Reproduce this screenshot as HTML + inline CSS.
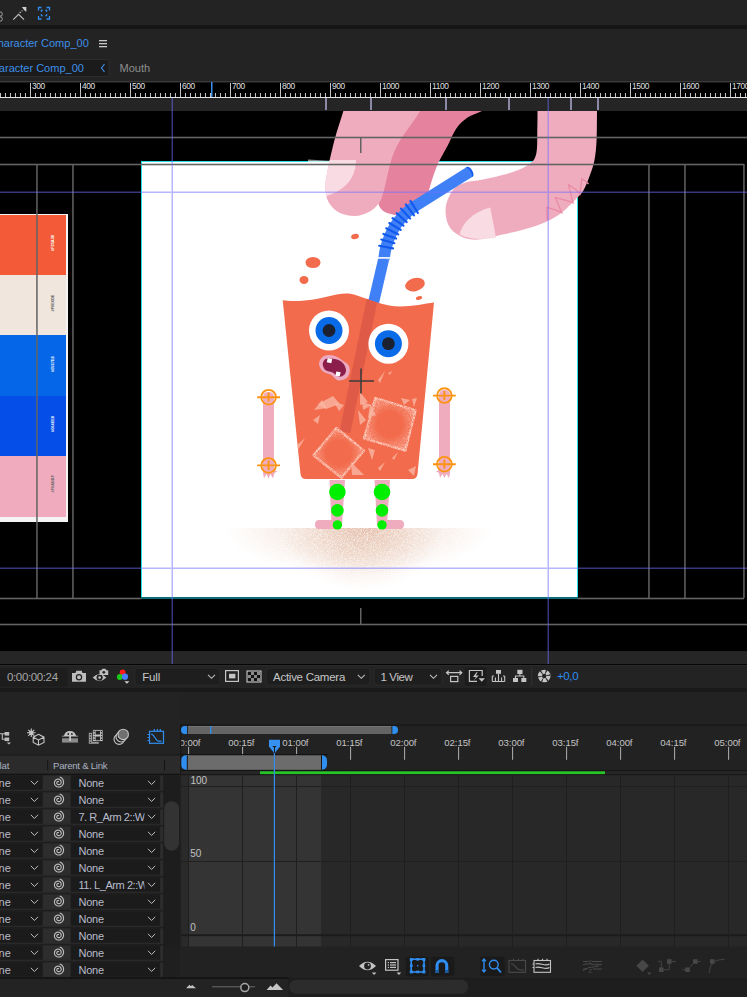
<!DOCTYPE html>
<html><head><meta charset="utf-8">
<style>
html,body{margin:0;padding:0;width:747px;height:997px;overflow:hidden;background:#232323;}
body{position:relative;font-family:"Liberation Sans",sans-serif;color:#b0b0b0;}
.a{position:absolute;}
svg{position:absolute;left:0;top:0;overflow:visible;}
</style></head><body>
<!-- top toolbar -->
<div class="a" style="left:0;top:0;width:747px;height:25px;background:#232323"></div>
<div class="a" style="left:0;top:25px;width:747px;height:4px;background:#161616"></div>
<div class="a" style="left:0;top:29px;width:747px;height:53px;background:#232323"></div>
<!-- ruler -->
<div class="a" style="left:0;top:81px;width:747px;height:1px;background:#3a3a3a"></div>
<div class="a" style="left:0;top:82px;width:747px;height:16px;background:#000"></div>
<div class="a" style="left:0;top:98px;width:747px;height:13px;background:#252525"></div>
<!-- viewer -->
<div class="a" style="left:0;top:111px;width:747px;height:540px;background:#000"></div>
<div class="a" style="left:0;top:651px;width:747px;height:13px;background:#262626"></div>
<div class="a" style="left:0;top:663.5px;width:747px;height:1.5px;background:#050505"></div><div class="a" style="left:0;top:665px;width:747px;height:1px;background:#2b2b2b"></div>
<div class="a" style="left:0;top:666px;width:747px;height:22px;background:#232323"></div>
<div class="a" style="left:0;top:688px;width:747px;height:4px;background:#1a1a1a"></div>
<div class="a" style="left:0;top:692px;width:747px;height:286px;background:#232323"></div>
<div class="a" style="left:0;top:978px;width:747px;height:19px;background:#1b1b1b"></div>
<!-- canvas -->
<div class="a" style="left:141px;top:161px;width:437px;height:437px;background:#fff"></div>

<svg width="747" height="997" style="left:0;top:0"><!-- canvas border -->
<rect x="141" y="161" width="1" height="437" fill="#22e0e8"/>
<rect x="577" y="161" width="1" height="437" fill="#22e0e8"/>
<rect x="141" y="161" width="437" height="1" fill="#22e0e8"/>
<rect x="141" y="597" width="437" height="2" fill="#0c6e74"/>
</svg>

<svg width="747" height="120" style="left:0;top:0">
<rect x="0" y="82" width="747" height="1" fill="#1a1a1a"/>
<path d="M30.5 83V97M80.5 83V97M130.5 83V97M180.5 83V97M230.5 83V97M280.5 83V97M330.5 83V97M380.5 83V97M430.5 83V97M480.5 83V97M530.5 83V97M580.5 83V97M630.5 83V97M680.5 83V97M730.5 83V97M0.5 93V97M5.5 93V97M10.5 93V97M15.5 93V97M20.5 93V97M25.5 93V97M35.5 93V97M40.5 93V97M45.5 93V97M50.5 93V97M55.5 93V97M60.5 93V97M65.5 93V97M70.5 93V97M75.5 93V97M85.5 93V97M90.5 93V97M95.5 93V97M100.5 93V97M105.5 93V97M110.5 93V97M115.5 93V97M120.5 93V97M125.5 93V97M135.5 93V97M140.5 93V97M145.5 93V97M150.5 93V97M155.5 93V97M160.5 93V97M165.5 93V97M170.5 93V97M175.5 93V97M185.5 93V97M190.5 93V97M195.5 93V97M200.5 93V97M205.5 93V97M210.5 93V97M215.5 93V97M220.5 93V97M225.5 93V97M235.5 93V97M240.5 93V97M245.5 93V97M250.5 93V97M255.5 93V97M260.5 93V97M265.5 93V97M270.5 93V97M275.5 93V97M285.5 93V97M290.5 93V97M295.5 93V97M300.5 93V97M305.5 93V97M310.5 93V97M315.5 93V97M320.5 93V97M325.5 93V97M335.5 93V97M340.5 93V97M345.5 93V97M350.5 93V97M355.5 93V97M360.5 93V97M365.5 93V97M370.5 93V97M375.5 93V97M385.5 93V97M390.5 93V97M395.5 93V97M400.5 93V97M405.5 93V97M410.5 93V97M415.5 93V97M420.5 93V97M425.5 93V97M435.5 93V97M440.5 93V97M445.5 93V97M450.5 93V97M455.5 93V97M460.5 93V97M465.5 93V97M470.5 93V97M475.5 93V97M485.5 93V97M490.5 93V97M495.5 93V97M500.5 93V97M505.5 93V97M510.5 93V97M515.5 93V97M520.5 93V97M525.5 93V97M535.5 93V97M540.5 93V97M545.5 93V97M550.5 93V97M555.5 93V97M560.5 93V97M565.5 93V97M570.5 93V97M575.5 93V97M585.5 93V97M590.5 93V97M595.5 93V97M600.5 93V97M605.5 93V97M610.5 93V97M615.5 93V97M620.5 93V97M625.5 93V97M635.5 93V97M640.5 93V97M645.5 93V97M650.5 93V97M655.5 93V97M660.5 93V97M665.5 93V97M670.5 93V97M675.5 93V97M685.5 93V97M690.5 93V97M695.5 93V97M700.5 93V97M705.5 93V97M710.5 93V97M715.5 93V97M720.5 93V97M725.5 93V97M735.5 93V97M740.5 93V97M745.5 93V97" stroke="#c4c4c4" stroke-width="1"/>
<rect x="0" y="97" width="747" height="1" fill="#e8e8e8"/>
<g font-family="Liberation Sans" font-size="8.4" fill="#e0e0e0" letter-spacing="-0.4">
<text x="32" y="89">300</text><text x="82" y="89">400</text><text x="132" y="89">500</text><text x="182" y="89">600</text><text x="232" y="89">700</text><text x="282" y="89">800</text><text x="332" y="89">900</text><text x="382" y="89">1000</text><text x="432" y="89">1100</text><text x="482" y="89">1200</text><text x="532" y="89">1300</text><text x="582" y="89">1400</text><text x="632" y="89">1500</text><text x="682" y="89">1600</text><text x="732" y="89">1700</text></g>
<rect x="211" y="82" width="1.5" height="15" fill="#3d8ff0"/>
<rect x="325" y="98" width="2" height="12" fill="#8a8aa8"/><rect x="370" y="98" width="2" height="12" fill="#8a8aa8"/><rect x="445" y="98" width="2" height="12" fill="#8a8aa8"/><rect x="508" y="98" width="2" height="12" fill="#8a8aa8"/><rect x="570" y="98" width="2" height="12" fill="#8a8aa8"/><rect x="597" y="98" width="2" height="12" fill="#8a8aa8"/>
</svg>

<div class="a" style="left:0;top:214px;width:68px;height:308px;background:#f4f4f4"></div>
<div class="a" style="left:0;top:215px;width:66px;height:60px;background:#f25a38"></div>
<div class="a" style="left:0;top:275px;width:66px;height:60px;background:#f0e6de"></div>
<div class="a" style="left:0;top:335px;width:66px;height:61px;background:#0567e8"></div>
<div class="a" style="left:0;top:396px;width:66px;height:60px;background:#064ee8"></div>
<div class="a" style="left:0;top:456px;width:66px;height:61px;background:#f0abbf"></div>
<svg width="747" height="997">
<g font-family="Liberation Sans" font-size="3.9" font-weight="bold">
<text transform="translate(53.6 251) rotate(-90)" fill="#ffffff">#F25A38</text>
<text transform="translate(53.6 311.5) rotate(-90)" fill="#555">#F0E6DE</text>
<text transform="translate(53.6 372) rotate(-90)" fill="#ffffff">#0567E8</text>
<text transform="translate(53.6 432) rotate(-90)" fill="#ffffff">#064EE8</text>
<text transform="translate(53.6 492.5) rotate(-90)" fill="#666">#F0ABBF</text>
</g>
</svg>

<svg width="747" height="997" style="left:0;top:0">
<defs>
<clipPath id="vclip"><rect x="0" y="111" width="747" height="540"/></clipPath>
<clipPath id="canvclip"><rect x="141" y="161" width="437" height="437"/></clipPath>
<radialGradient id="shg" cx="358" cy="527" r="135" gradientUnits="userSpaceOnUse" gradientTransform="translate(358 527) scale(1 0.36) translate(-358 -527)">
<stop offset="0" stop-color="#d8a080" stop-opacity="0.32"/>
<stop offset="0.6" stop-color="#dcaa8c" stop-opacity="0.22"/>
<stop offset="0.85" stop-color="#dcae92" stop-opacity="0.08"/>
<stop offset="1" stop-color="#e0b89c" stop-opacity="0"/>
</radialGradient>
<radialGradient id="shg2" cx="362" cy="527" r="80" gradientUnits="userSpaceOnUse" gradientTransform="translate(362 527) scale(1 0.8) translate(-362 -527)">
<stop offset="0" stop-color="#d09070" stop-opacity="0.45"/>
<stop offset="0.5" stop-color="#d49a7a" stop-opacity="0.25"/>
<stop offset="1" stop-color="#dcae92" stop-opacity="0"/>
</radialGradient>
<filter id="grain" x="0" y="0" width="100%" height="100%">
<feTurbulence type="fractalNoise" baseFrequency="1.3" numOctaves="1" seed="5" result="nz"/>
<feColorMatrix in="nz" type="matrix" values="0 0 0 0 0  0 0 0 0 0  0 0 0 0 0  0 0 0 1.8 -0.1" result="na"/>
<feComposite in="SourceGraphic" in2="na" operator="in"/>
</filter>
</defs>
<defs><clipPath id="glassclip"><path d="M282.7 300.3 C295 302.5 315 300 330 296 C340 293.5 348 292.3 357 295.5 C370 300 386 306.5 400 306.5 C413 306.5 425 303.5 434 302.5 L417.5 474 Q417 479 412 479 L306 479 Q301 479 300.5 474 Z"/></clipPath></defs>
<g clip-path="url(#vclip)">
<g clip-path="url(#canvclip)"><g filter="url(#grain)"><rect x="215" y="528" width="300" height="68" fill="url(#shg)"/><rect x="270" y="528" width="190" height="68" fill="url(#shg2)"/></g></g>
<path d="M415.0 90.0 C399.8 93.5 412.1 102.7 409.0 111.0 C405.9 119.3 400.0 129.8 396.4 140.0 C392.8 150.2 390.1 163.3 387.5 172.0 C384.9 180.7 382.5 186.7 381.0 192.0 C379.5 197.3 377.8 200.7 378.5 204.0 C379.2 207.3 381.5 210.1 385.0 212.0 C388.5 213.9 394.8 215.2 399.6 215.2 C404.4 215.2 409.8 214.4 414.0 212.0 C418.2 209.6 422.0 206.3 425.0 201.0 C428.0 195.7 429.8 186.4 432.0 180.0 C434.2 173.6 435.8 168.4 438.5 162.6 C441.2 156.8 445.1 150.6 448.0 145.0 C450.9 139.4 452.8 133.6 456.0 129.0 C459.2 124.4 463.2 120.6 467.5 117.6 C471.8 114.6 476.6 113.9 482.0 111.0 C487.4 108.1 497.0 103.5 500.0 100.0 C503.0 96.5 514.2 91.7 500.0 90.0 C485.8 88.3 430.2 86.5 415.0 90.0Z" fill="#e5839f"/>
<defs><clipPath id="lfclip"><path d="M349.0 90.0 C334.9 93.5 345.8 102.7 343.4 111.0 C341.0 119.3 337.2 129.8 334.5 140.0 C331.8 150.2 328.8 164.0 327.3 172.0 C325.8 180.0 325.2 183.0 325.4 188.0 C325.6 193.0 326.2 197.9 328.5 202.0 C330.8 206.1 334.6 210.2 339.0 212.5 C343.4 214.8 349.6 216.1 354.6 216.0 C359.6 215.9 364.9 214.2 369.0 212.0 C373.1 209.8 376.6 206.3 379.0 203.0 C381.4 199.7 380.8 200.8 383.5 192.0 C386.2 183.2 388.9 163.5 395.0 150.0 C401.1 136.5 414.5 121.0 420.0 111.0 C425.5 101.0 439.8 93.5 428.0 90.0 C416.2 86.5 363.1 86.5 349.0 90.0Z"/></clipPath></defs>
<path d="M349.0 90.0 C334.9 93.5 345.8 102.7 343.4 111.0 C341.0 119.3 337.2 129.8 334.5 140.0 C331.8 150.2 328.8 164.0 327.3 172.0 C325.8 180.0 325.2 183.0 325.4 188.0 C325.6 193.0 326.2 197.9 328.5 202.0 C330.8 206.1 334.6 210.2 339.0 212.5 C343.4 214.8 349.6 216.1 354.6 216.0 C359.6 215.9 364.9 214.2 369.0 212.0 C373.1 209.8 376.6 206.3 379.0 203.0 C381.4 199.7 380.8 200.8 383.5 192.0 C386.2 183.2 388.9 163.5 395.0 150.0 C401.1 136.5 414.5 121.0 420.0 111.0 C425.5 101.0 439.8 93.5 428.0 90.0 C416.2 86.5 363.1 86.5 349.0 90.0Z" fill="#f0acbf"/>
<path d="M308 159.4 L330 160.8 L330 161 L308 161 Z" fill="#8a8a8a"/><rect x="308" y="161" width="22" height="1" fill="#b0f4f6"/>
<path clip-path="url(#lfclip)" d="M300 160 L356 160 C356 178 345 192 320 198 L300 200 Z" fill="#f9dbe4"/>
<path d="M537.5 90.0 C547.4 86.5 587.1 86.5 597.0 90.0 C606.9 93.5 597.1 102.7 597.0 111.0 C596.9 119.3 597.0 131.8 596.6 140.0 C596.2 148.2 595.6 154.2 594.5 160.0 C593.4 165.8 591.9 169.9 590.0 175.0 C588.1 180.1 585.9 186.4 583.4 190.5 C580.9 194.6 579.4 195.6 575.3 199.7 C571.1 203.8 565.0 210.7 558.5 215.0 C552.0 219.3 545.5 222.5 536.4 225.7 C527.3 228.9 514.7 231.9 504.0 234.2 C493.3 236.5 480.8 240.5 472.0 239.6 C463.2 238.7 455.4 234.1 451.0 229.0 C446.6 223.9 445.3 215.5 445.6 209.0 C445.9 202.5 449.5 194.4 452.9 190.0 C456.2 185.6 460.7 184.3 465.7 182.6 C470.7 180.9 475.0 181.4 482.8 179.6 C490.6 177.8 504.9 174.7 512.8 172.0 C520.7 169.3 526.1 166.8 530.0 163.6 C533.9 160.4 535.2 158.5 536.4 152.9 C537.6 147.3 537.1 137.0 537.3 130.0 C537.5 123.0 537.5 117.7 537.5 111.0 C537.5 104.3 527.6 93.5 537.5 90.0Z" fill="#f0acbf"/>
<path d="M459.5 234.5 C462 224 472 212 490.3 207.5 L496 237.8 C484 239.5 470 240 459.5 234.5 Z" fill="#f9dbe4"/>
<path d="M547.2 220 L546.8 207.3 Q555 209 561.7 212.6 L555.3 197.7 Q566 200 573 203 L568.5 184.9 Q576 189 580 194 L581.8 178.8 Q586 181 588.5 184" fill="none" stroke="#e98aa6" stroke-width="1.3" stroke-linejoin="miter"/>
<g fill="#f26b4c">
<ellipse cx="313" cy="262.5" rx="7.5" ry="5.5"/>
<ellipse cx="304" cy="280" rx="4.5" ry="4"/>
<ellipse cx="355" cy="236.5" rx="4" ry="2.6" transform="rotate(-15 355 236.5)"/>
<ellipse cx="415" cy="284.6" rx="10" ry="6.5" transform="rotate(-15 415 284.6)"/>
<ellipse cx="419" cy="298" rx="3.2" ry="1.8" transform="rotate(-15 419 298)"/>
</g>
<path d="M469.8 171.7 L413 207.5" stroke="#3f80f7" stroke-width="11.2"/>
<path d="M414.0 207.0 L414.1 206.9 L409.9 209.9 L405.6 213.6 L401.7 217.6 L398.0 221.9 L395.0 226.4 L392.2 231.3 L389.8 236.2 L387.9 241.4 L386.1 247.1 L385.0 252.0 L384.0 259.0" stroke="#3f80f7" stroke-width="11.5" fill="none" stroke-linejoin="round"/>
<path d="M410.4 200.9 L417.9 213.0" stroke="#1158ef" stroke-width="2.1" stroke-linecap="round"/>
<path d="M405.8 204.4 L414.0 215.4" stroke="#1158ef" stroke-width="2.1" stroke-linecap="round"/>
<path d="M401.0 208.6 L410.2 218.6" stroke="#1158ef" stroke-width="2.1" stroke-linecap="round"/>
<path d="M396.7 213.2 L406.7 222.1" stroke="#1158ef" stroke-width="2.1" stroke-linecap="round"/>
<path d="M392.5 218.1 L403.5 225.7" stroke="#1158ef" stroke-width="2.1" stroke-linecap="round"/>
<path d="M389.3 223.0 L400.7 229.9" stroke="#1158ef" stroke-width="2.1" stroke-linecap="round"/>
<path d="M386.2 228.3 L398.2 234.4" stroke="#1158ef" stroke-width="2.1" stroke-linecap="round"/>
<path d="M383.4 233.9 L396.1 238.6" stroke="#1158ef" stroke-width="2.1" stroke-linecap="round"/>
<path d="M381.3 239.5 L394.4 243.2" stroke="#1158ef" stroke-width="2.1" stroke-linecap="round"/>
<path d="M379.2 245.8 L393.0 248.4" stroke="#1158ef" stroke-width="2.1" stroke-linecap="round"/>
<path d="M383.8 258.5 L373.2 304" stroke="#3f80f7" stroke-width="11"/>
<path d="M377 257.9 L391 257.9" stroke="#fff" stroke-width="1.6"/>
<ellipse cx="469.8" cy="171.7" rx="2.6" ry="5.6" transform="rotate(-32.3 469.8 171.7)" fill="#1158ef"/><ellipse cx="468.6" cy="172.45" rx="2.2" ry="5.6" transform="rotate(-32.3 468.6 172.45)" fill="#3f80f7"/>
<path d="M282.7 300.3 C295 302.5 315 300 330 296 C340 293.5 348 292.3 357 295.5 C370 300 386 306.5 400 306.5 C413 306.5 425 303.5 434 302.5 L417.5 474 Q417 479 412 479 L306 479 Q301 479 300.5 474 Z" fill="#f26b4c"/>
<g clip-path="url(#glassclip)"><path d="M374.5 288 L345 432" stroke="#e05a48" stroke-width="11"/></g>
<!-- eyes -->
<circle cx="329" cy="330.5" r="20" fill="#fff"/>
<circle cx="329" cy="330.5" r="13.5" fill="#0a6be8"/>
<circle cx="329" cy="330.5" r="6.4" fill="#1b2130"/>
<circle cx="388.4" cy="343.7" r="20" fill="#fff"/>
<circle cx="388.4" cy="343.7" r="13.5" fill="#0a6be8"/>
<circle cx="388.4" cy="343.7" r="6.4" fill="#1b2130"/>
<!-- mouth -->
<path d="M319.0 363.9 C318.9 361.5 320.8 358.5 322.5 357.0 C324.2 355.5 327.2 355.1 329.5 355.1 C331.8 355.1 334.3 355.9 336.5 356.8 C338.7 357.7 340.9 359.4 342.8 360.7 C344.7 362.0 346.8 363.0 348.0 364.5 C349.2 366.0 349.7 368.0 349.8 369.8 C349.9 371.6 349.3 374.0 348.5 375.5 C347.7 377.0 346.8 378.1 345.0 378.9 C343.2 379.7 339.8 380.9 337.5 380.2 C335.2 379.5 333.4 376.3 331.0 374.8 C328.6 373.3 325.0 373.2 323.0 371.4 C321.0 369.6 319.1 366.3 319.0 363.9Z" fill="#eca9c1"/>
<path d="M322.8 365.0 C322.5 363.4 323.2 361.6 324.0 360.5 C324.8 359.4 325.8 358.9 327.3 358.6 C328.8 358.3 331.1 358.5 333.0 358.8 C334.9 359.1 337.2 359.4 339.0 360.2 C340.8 361.0 342.3 362.2 343.5 363.8 C344.7 365.4 345.8 368.0 346.0 369.8 C346.2 371.6 345.5 373.3 344.5 374.5 C343.5 375.7 341.6 376.7 340.2 376.8 C338.8 376.9 337.2 375.9 336.0 375.2 C334.8 374.5 334.4 373.3 332.7 372.5 C331.0 371.7 327.3 371.6 325.7 370.3 C324.1 369.1 323.1 366.6 322.8 365.0Z" fill="#8b1e4a"/>
<rect x="327.2" y="358.4" width="4.6" height="4.4" fill="#fff" transform="rotate(12 329.5 360.6)"/>
<rect x="335.8" y="371.8" width="4.4" height="4.4" fill="#fff" transform="rotate(12 338 374)"/>

<!-- ice cubes -->
<defs>
<filter id="noise" x="0" y="0" width="100%" height="100%">
<feTurbulence type="fractalNoise" baseFrequency="1.2" numOctaves="1" seed="3" result="n"/>
<feColorMatrix type="matrix" values="0 0 0 0 1  0 0 0 0 0.85  0 0 0 0 0.8  0 0 0 1.6 -0.55" result="m"/>
<feComposite in="m" in2="SourceGraphic" operator="in"/>
</filter>
<radialGradient id="icefill" cx="0.5" cy="0.5" r="0.62">
<stop offset="0.4" stop-color="#ffd0c0" stop-opacity="0"/>
<stop offset="1" stop-color="#ffe0d6" stop-opacity="1"/>
</radialGradient>
<filter id="grain2" x="-10%" y="-10%" width="120%" height="120%"><feTurbulence type="fractalNoise" baseFrequency="1.4" numOctaves="1" seed="9" result="nz"/><feColorMatrix in="nz" type="matrix" values="0 0 0 0 0  0 0 0 0 0  0 0 0 0 0  0 0 0 1.7 -0.25" result="na"/><feComposite in="SourceGraphic" in2="na" operator="in"/></filter>
</defs>
<g clip-path="url(#glassclip)">
<g filter="url(#grain2)"><path d="M336.5 428 L364 450.6 L341.5 477.8 L313.4 455.3 Z" fill="url(#icefill)" stroke="#ffd8cc" stroke-width="2.4" stroke-linejoin="round"/></g>
<g filter="url(#grain2)"><path d="M375.3 398 L415.6 410.3 L405.3 450.6 L364 438.4 Z" fill="url(#icefill)" stroke="#ffd8cc" stroke-width="2.4" stroke-linejoin="round"/></g>
<g fill="#f9b5a3" fill-opacity="0.8">
<polygon points="314,410 322,400 327,408"/>
<polygon points="318,404 333,396 340,404 326,409"/>
<polygon points="334,402 344,405 339,411"/>
<polygon points="313,420 320,415 318,424"/>
<polygon points="360,392 368,402 360,405"/>
<polygon points="362,402 372,405 363,410"/>
<polygon points="358,410 366,420 360,425"/>
<polygon points="370,404 376,415 368,418"/>
<polygon points="412,399 417,398 414,407"/>
<polygon points="296,446 305,438 298,450"/>
<polygon points="375,450 372,460 368,448"/>
<polygon points="351,462 364,475 352,475"/>
<polygon points="378,468 385,462 380,471"/>
<polygon points="392,458 398,452 394,460"/>
<polygon points="401,398 410,400 404,405"/>
<polygon points="378,380 385,371 380,383"/>
<polygon points="388,373 392,371 390,375"/>
<polygon points="408,470 416,466 414,476"/>
</g>
</g>
<!-- arms -->
<g fill="#f0acbf">
<path d="M263 397 Q263 392 268.5 392 Q274 392 274 397 L274 470 L277.5 471.5 L274.5 473 L273 478.5 L270.5 474 L268.5 478.5 L266.5 474 L264 478.5 L263 473 Z"/>
<path d="M439 395 Q439 390 444.5 390 Q450 390 450 395 L450 473 L449 478 L446.5 474 L444.5 478 L442.5 474 L440 478 L439 473 L436 471.5 L439 470 Z"/>
</g>
<g fill="none" stroke="#fb9313" stroke-width="1.9">
<circle cx="268.6" cy="397.2" r="7.3"/>
<circle cx="268.6" cy="465.4" r="7.3"/>
<circle cx="444.4" cy="395.6" r="7.3"/>
<circle cx="444.4" cy="464.2" r="7.3"/>
<path d="M257.2 397.2H280M268.6 392.5V401.5M257.2 465.4H280M268.6 460.5V470M433 395.6H455.8M444.4 391V400M433 464.2H455.8M444.4 459.5V468.5"/>
</g>
<!-- legs -->
<g fill="#f0acbf">
<path d="M329.5 480 L345 480 L342 525 L331.5 525 Z"/>
<path d="M374.5 480 L390 480 L387 525 L377 525 Z"/>
<path d="M319 520 L338 520 L338 529 L319 529 Q315 529 315 524.5 Q315 520 319 520 Z"/>
<path d="M381 520 L400 520 Q404 520 404 524.5 Q404 529 400 529 L381 529 Z"/>
</g>
<g fill="#00ee00">
<circle cx="337.4" cy="492" r="8.3"/>
<circle cx="337.4" cy="510.4" r="6.3"/>
<circle cx="337.4" cy="524.9" r="4.7"/>
<circle cx="382" cy="492" r="8.3"/>
<circle cx="382" cy="510.4" r="6.3"/>
<circle cx="382" cy="524.9" r="4.7"/>
</g>
<!-- crosshair -->
<path d="M349 381H374M361 368.5V393.5" stroke="#3c3c3c" stroke-width="1.6"/>
</g>
</svg>

<svg width="747" height="997" style="left:0;top:0">
<!-- gray frame lines -->
<g fill="#636363">
<rect x="0" y="136.7" width="747" height="1.6"/>
<rect x="0" y="163.7" width="744" height="1.6"/>
<rect x="0" y="597.7" width="141" height="1.6"/>
<rect x="578" y="597.7" width="166" height="1.6"/>
<rect x="0" y="623.7" width="747" height="1.6"/>
<rect x="36.2" y="164" width="1.5" height="434"/>
<rect x="72.2" y="164" width="1.5" height="434"/>
<rect x="648.2" y="164" width="1.5" height="434"/>
<rect x="684.2" y="164" width="1.5" height="434"/>
<rect x="743.2" y="164" width="1.5" height="434"/>
<rect x="360" y="137" width="1.5" height="16"/>
<rect x="360" y="608" width="1.5" height="16"/>
</g>
<!-- guides -->
<g fill="rgb(110,110,255)" fill-opacity="0.5">
<rect x="171.5" y="98" width="1.5" height="566"/>
<rect x="547.5" y="98" width="1.5" height="566"/>
<rect x="0" y="191.5" width="171.5" height="1.5"/>
<rect x="173" y="191.5" width="374.5" height="1.5"/>
<rect x="549" y="191.5" width="198" height="1.5"/>
<rect x="0" y="567.5" width="171.5" height="1.5"/>
<rect x="173" y="567.5" width="374.5" height="1.5"/>
<rect x="549" y="567.5" width="198" height="1.5"/>
</g>
</svg>

<svg width="747" height="100" style="left:0;top:0">
<!-- partial icon at left edge -->
<path d="M-2 12 H0.8 Q2.2 12 2.2 13.5 V14.5 Q2.2 16 0.8 16 H-2 Z" fill="none" stroke="#a8a8a8" stroke-width="1"/>
<path d="M-2 17 H0.8 Q2.2 17 2.2 18.5 V19.5 Q2.2 21 0.8 21 H-2 Z" fill="none" stroke="#a8a8a8" stroke-width="1"/>
<!-- arrow icon -->
<path d="M13.2 19.6 L18.6 14.4 L24 19.6" fill="none" stroke="#bdbdbd" stroke-width="1.2"/>
<rect x="19.6" y="11.8" width="1.3" height="1.3" fill="#c8c8c8"/><rect x="21.4" y="10.1" width="1.3" height="1.3" fill="#8a8a8a"/>
<path d="M21.8 7 L26.3 7 L26.3 11.7 L24.6 10.6 Z" fill="#d0d0d0"/>
<!-- focus icon -->
<g fill="none" stroke="#2f8ef0" stroke-width="1.3">
<path d="M38.5 10.5V7.5H41.5M46.5 7.5H49.5V10.5M49.5 16V19H46.5M41.5 19H38.5V16"/>
<path d="M41.3 11.9V10.3H42.9M45.1 10.3H46.7V11.9M46.7 14.1V15.7H45.1M42.9 15.7H41.3V14.1" stroke-width="1.1"/>
</g>
<!-- tab -->
<text x="-10.3" y="46.6" font-family="Liberation Sans" font-size="11" fill="#3d8fe8">Character Comp_00</text>
<g fill="#c8c8c8"><rect x="99" y="40" width="8" height="1.3"/><rect x="99" y="43" width="8" height="1.3"/><rect x="99" y="46" width="8" height="1.3"/></g>
<!-- subtab -->
<rect x="-5" y="59.5" width="114" height="17" rx="2.5" fill="#1b1b1b" stroke="#2c2c2c" stroke-width="1"/>
<text x="-15.2" y="72" font-family="Liberation Sans" font-size="11" fill="#3d8fe8">Character Comp_00</text>
<path d="M104.5 64 L101.5 68 L104.5 72" fill="none" stroke="#3d8fe8" stroke-width="1.2"/>
<text x="119.6" y="72" font-family="Liberation Sans" font-size="11" fill="#8e8e8e">Mouth</text>
</svg>

<svg width="747" height="997" style="left:0;top:0">
<rect x="-3" y="668.5" width="70.5" height="18" fill="#1d1d1d"/>
<text x="7" y="680.6" font-family="Liberation Sans" font-size="11.5" fill="#a6a6a6" letter-spacing="-0.37">0:00:00:24</text>
<!-- camera -->
<path d="M72 673 H75.5 L76.3 670.8 H81.7 L82.5 673 H86 V681.8 H72 Z" fill="#bdbdbd"/>
<circle cx="79" cy="677.2" r="2.6" fill="none" stroke="#232323" stroke-width="1.2"/>
<!-- eye -->
<path d="M92.6 677.6 Q99.5 670.5 106.4 677.6 Q99.5 684.7 92.6 677.6 Z" fill="#bdbdbd"/>
<circle cx="99.6" cy="677.6" r="3.1" fill="#232323"/>
<circle cx="99.6" cy="677.6" r="1.3" fill="#bdbdbd"/>
<path d="M99.5 670.2 H101.5 L102.3 668.7 H105.5 L106.3 670.2 H108.2 V675 H99.5 Z" fill="#bdbdbd"/>
<circle cx="103.8" cy="672.3" r="1.4" fill="#232323"/>
<!-- rgb -->
<circle cx="122.6" cy="672.3" r="2.9" fill="#ff1a1a"/>
<circle cx="119.8" cy="677" r="2.9" fill="#19c819"/>
<circle cx="125" cy="676.7" r="3.1" fill="#4a7cff"/>
<path d="M124.4 681.2 H129.4 L126.9 683.8 Z" fill="#d0d0d0"/>
<!-- dropdowns -->
<g fill="#1e1e1e" stroke="#2b2b2b" stroke-width="1">
<rect x="134.8" y="668" width="85.3" height="17.2" rx="3"/>
<rect x="266" y="668" width="104.3" height="17.2" rx="3"/>
<rect x="374" y="668" width="68" height="17.2" rx="3"/>
</g>
<g font-family="Liberation Sans" font-size="11.5" fill="#c6c6c6">
<text x="142.2" y="680.6" letter-spacing="-0.12">Full</text>
<text x="273" y="680.6" letter-spacing="-0.26">Active Camera</text>
<text x="380.5" y="680.6" letter-spacing="-0.38">1 View</text>
</g>
<g fill="none" stroke="#bdbdbd" stroke-width="1.1">
<path d="M208 674.8 L211.5 678.3 L215 674.8"/>
<path d="M357.8 674.8 L361.3 678.3 L364.8 674.8"/>
<path d="M430 674.8 L433.5 678.3 L437 674.8"/>
</g>
<!-- region icon -->
<rect x="225.6" y="670.6" width="12.8" height="10.8" fill="none" stroke="#c4c4c4" stroke-width="1.2"/>
<rect x="229" y="673.8" width="6.4" height="4.6" fill="#c4c4c4"/>
<!-- checker -->
<rect x="247" y="671" width="14" height="11" fill="none" stroke="#c8c8c8" stroke-width="1.1"/>

<rect x="248" y="672" width="3" height="3" fill="#111"/><rect x="251" y="672" width="3" height="3" fill="#8a8a8a"/><rect x="254" y="672" width="3" height="3" fill="#111"/><rect x="257" y="672" width="3" height="3" fill="#8a8a8a"/><rect x="248" y="675" width="3" height="3" fill="#8a8a8a"/><rect x="251" y="675" width="3" height="3" fill="#111"/><rect x="254" y="675" width="3" height="3" fill="#8a8a8a"/><rect x="257" y="675" width="3" height="3" fill="#111"/><rect x="248" y="678" width="3" height="3" fill="#111"/><rect x="251" y="678" width="3" height="3" fill="#8a8a8a"/><rect x="254" y="678" width="3" height="3" fill="#111"/><rect x="257" y="678" width="3" height="3" fill="#8a8a8a"/>
<!-- icon arrows+rect -->
<g fill="none" stroke="#c4c4c4" stroke-width="1.2">
<path d="M446.5 672.7 H461.8 M448.8 670.6 L446.5 672.7 L448.8 674.8 M459.5 670.6 L461.8 672.7 L459.5 674.8"/>
<rect x="450.6" y="676.4" width="7.2" height="5.2"/>
</g>
<!-- fast preview -->
<rect x="464.7" y="667.6" width="21.7" height="18.1" rx="2" fill="#1c1c1c"/>
<path d="M482.2 676 V670.5 H469.4 V681.4 H477" fill="none" stroke="#c4c4c4" stroke-width="1.2"/>
<path d="M476.5 672.3 L473 677 H476 L474 680.2 L478.8 675.4 H475.8 L477.6 672.3 Z" fill="#c4c4c4"/>
<path d="M478.5 678.3 H485 L481.75 681.8 Z" fill="#c4c4c4"/>
<!-- grid icon -->
<rect x="496" y="670" width="5" height="3.8" fill="#c4c4c4"/>
<path d="M498.5 673.8 V681.5 M492.3 676 V681.5 M504.7 676 V681.5 M492.3 681.5 H504.7 M495.4 677.5 V681.5 M501.6 677.5 V681.5 M492.3 676 H494 M503 676 H504.7" fill="none" stroke="#c4c4c4" stroke-width="1.1"/>
<!-- hierarchy -->
<g fill="#c4c4c4">
<rect x="517.3" y="669.8" width="5.2" height="4.2"/>
<rect x="513" y="678" width="5" height="4"/>
<rect x="521.3" y="678" width="5" height="4"/>
</g>
<path d="M519.9 674 V676 M515.5 678 V676 H523.8 V678" fill="none" stroke="#c4c4c4" stroke-width="1.1"/>
<rect x="531.3" y="667.3" width="1" height="18.3" fill="#343434"/>
<!-- shutter -->
<circle cx="544.2" cy="676" r="6.3" fill="#c4c4c4"/>
<g fill="#232323">
<circle cx="544.2" cy="676" r="2.2"/>
<path d="M544.2 676 L546 669.8 L547.4 670.5 Z M544.2 676 L550.2 674.3 L550.4 675.8 Z M544.2 676 L548.6 680.6 L547.4 681.4 Z M544.2 676 L542.2 682.1 L540.9 681.6 Z M544.2 676 L538.2 677.6 L538 676.2 Z M544.2 676 L539.8 671.4 L541 670.6 Z"/>
</g>
<text x="556.9" y="680.3" font-family="Liberation Sans" font-size="11.5" fill="#2e8ef2" letter-spacing="-0.35">+0,0</text>
</svg>

<svg width="747" height="997" style="left:0;top:0">
<defs><clipPath id="nameclip"><rect x="70" y="770" width="74.5" height="210"/></clipPath></defs>
<!-- tl icons -->
<g fill="none" stroke="#bdbdbd" stroke-width="1.1">
<path d="M0 733.8 H5 M2.3 733.8 V739.3 H5"/>
</g>
<g fill="#bdbdbd">
<rect x="4.6" y="732" width="4.6" height="3.6"/><rect x="4.6" y="737.5" width="4.6" height="3.6"/>
<path d="M6.8 742.4 H11 L8.9 744.5 Z"/>
</g>
<!-- star cube -->
<g stroke="#c4c4c4" stroke-width="1.1" fill="none">
<path d="M31.3 728.5 V737 M27 732.8 H35.6 M28.3 729.8 L34.3 735.8 M34.3 729.8 L28.3 735.8"/>
<path d="M38.5 734.3 L44 737.2 V742.5 L38.5 745.2 L33.2 742.5 V737.2 Z M33.2 737.2 L38.5 740 L44 737.2 M38.5 740 V745.2"/>
</g>
<circle cx="31.3" cy="732.8" r="2.2" fill="#c4c4c4"/>
<!-- hat -->
<path d="M64 735.8 Q65 731 70 731 Q75 731 76 735.8 H78 V736.6 H62 V735.8 Z" fill="#c4c4c4"/>
<rect x="62" y="738.3" width="16" height="4.3" fill="#8a8a8a"/>
<rect x="69.2" y="735" width="1.8" height="6" fill="#c4c4c4"/>
<circle cx="68.3" cy="734" r="0.9" fill="#232323"/><circle cx="71.9" cy="734" r="0.9" fill="#232323"/>
<!-- film -->
<rect x="88.8" y="732.8" width="10" height="11" fill="#9a9a9a"/>
<rect x="92.5" y="729.8" width="10.5" height="11.6" fill="#c4c4c4" stroke="#232323" stroke-width="0.8"/>
<g fill="#232323"><rect x="93.6" y="731" width="1.2" height="1.2"/><rect x="93.6" y="733.6" width="1.2" height="1.2"/><rect x="93.6" y="736.2" width="1.2" height="1.2"/><rect x="93.6" y="738.8" width="1.2" height="1.2"/>
<rect x="100.8" y="731" width="1.2" height="1.2"/><rect x="100.8" y="733.6" width="1.2" height="1.2"/><rect x="100.8" y="736.2" width="1.2" height="1.2"/><rect x="100.8" y="738.8" width="1.2" height="1.2"/>
<rect x="95.6" y="731" width="4.4" height="3.5"/><rect x="95.6" y="736.5" width="4.4" height="3.8"/></g>
<g fill="#232323"><rect x="89.8" y="734" width="1.1" height="1.1"/><rect x="89.8" y="736.6" width="1.1" height="1.1"/><rect x="89.8" y="739.2" width="1.1" height="1.1"/><rect x="89.8" y="741.8" width="1.1" height="1.1"/></g>
<!-- motion blur -->
<circle cx="119.2" cy="739.2" r="5.2" fill="#232323" stroke="#c4c4c4" stroke-width="1.1"/>
<circle cx="121.2" cy="736.8" r="5.2" fill="#232323" stroke="#c4c4c4" stroke-width="1.1"/>
<circle cx="123.2" cy="734.4" r="5.2" fill="#707070" stroke="#c4c4c4" stroke-width="1.1"/>
<!-- graph editor blue -->
<g fill="none" stroke="#2f8ef0" stroke-width="1.2">
<rect x="149.5" y="731.3" width="14" height="12"/>
<path d="M154.3 729 V731.3 M157.3 729 V731.3 M160.3 729 V731.3 M147.5 734.5 H149.5 M147.5 737.5 H149.5 M147.5 740.5 H149.5"/>
<path d="M151.2 734.2 C154.5 734.2 155.5 741.2 158.8 741.2 H161.5"/>
</g>
<rect x="0" y="754.6" width="180" height="1" fill="#151515"/>
<rect x="0" y="755.6" width="180" height="18.2" fill="#2b2b2b"/>
<rect x="0" y="773.8" width="180" height="1.5" fill="#131313"/>
<rect x="47.2" y="760" width="1" height="10.5" fill="#141414"/>
<rect x="164" y="760" width="1" height="10.5" fill="#141414"/>
<text x="-0.6" y="768.7" font-family="Liberation Sans" font-size="9.6" fill="#aab2c2">lat</text>
<text x="53" y="768.7" font-family="Liberation Sans" font-size="9.6" letter-spacing="-0.25" fill="#aab2c2">Parent &amp; Link</text>
<rect x="0" y="775.3" width="180" height="203" fill="#262626"/>
<rect x="0" y="775.5" width="42.8" height="14.3" fill="#1b1b1b"/><rect x="42.8" y="775.5" width="28" height="14.3" fill="#2d2d2d"/><rect x="70.8" y="775.5" width="89.5" height="14.3" fill="#1b1b1b"/><rect x="160.3" y="775.5" width="3" height="14.3" fill="#2d2d2d"/><rect x="0" y="789.8" width="163.3" height="1" fill="#2e2e2e"/><rect x="0" y="790.8" width="163.3" height="1.7" fill="#1e1e1e"/><text x="-1.4" y="786.5" font-family="Liberation Sans" font-size="11" fill="#b9bccb">ne</text><path d="M30.8 780.8 L34.4 784.5 L38 780.8" fill="none" stroke="#bdbdbd" stroke-width="1"/><path d="M148 780.8 L151.6 784.5 L155.2 780.8" fill="none" stroke="#bdbdbd" stroke-width="1"/><path d="M60.13 777.17 L60.91 777.56 L61.61 778.05 L62.22 778.64 L62.72 779.32 L63.11 780.05 L63.37 780.83 L63.51 781.63 L63.53 782.43 L63.42 783.21 L63.19 783.97 L62.86 784.66 L62.42 785.29 L61.90 785.84 L61.30 786.30 L60.65 786.65 L59.96 786.89 L59.25 787.02 L58.54 787.04 L57.85 786.95 L57.18 786.75 L56.56 786.46 L56.00 786.08 L55.52 785.62 L55.12 785.10 L54.80 784.53 L54.59 783.93 L54.47 783.31 L54.45 782.69 L54.53 782.09 L54.69 781.51 L54.95 780.97 L55.27 780.48 L55.67 780.06 L56.11 779.72 L56.60 779.45 L57.12 779.26 L57.65 779.16 L58.18 779.14 L58.69 779.20 L59.19 779.35 L59.64 779.56 L60.05 779.84 L60.40 780.17 L60.70 780.55 L60.92 780.96 L61.08 781.39 L61.16 781.83 L61.17 782.27 L61.11 782.69 L60.99 783.10 L60.82 783.47 L60.59 783.80 L60.31 784.09 L60.01 784.32 L59.67 784.50 L59.32 784.62 L58.97 784.68 L58.62 784.68 L58.28 784.63 L57.97 784.53 L57.68 784.38 L57.43 784.20 L57.21 783.98 L57.04 783.74 L56.91 783.48 L56.83 783.22 L56.80 782.95 L56.81 782.69 L56.85 782.44 L56.94 782.22 L57.06 782.01 L57.20 781.84 L57.36 781.70 L57.54 781.59 L57.72 781.52 L57.91 781.48 L58.09 781.47 L58.26 781.49 L58.42 781.54 L58.56 781.61" fill="none" stroke="#bdbdbd" stroke-width="1.15" stroke-linecap="round"/><text clip-path="url(#nameclip)" x="78.4" y="786.5" font-family="Liberation Sans" font-size="11" fill="#b9bccb" letter-spacing="-0.2">None</text>
<rect x="0" y="792.5" width="42.8" height="14.3" fill="#1b1b1b"/><rect x="42.8" y="792.5" width="28" height="14.3" fill="#2d2d2d"/><rect x="70.8" y="792.5" width="89.5" height="14.3" fill="#1b1b1b"/><rect x="160.3" y="792.5" width="3" height="14.3" fill="#2d2d2d"/><rect x="0" y="806.8" width="163.3" height="1" fill="#2e2e2e"/><rect x="0" y="807.8" width="163.3" height="1.7" fill="#1e1e1e"/><text x="-1.4" y="803.5" font-family="Liberation Sans" font-size="11" fill="#b9bccb">ne</text><path d="M30.8 797.8 L34.4 801.5 L38 797.8" fill="none" stroke="#bdbdbd" stroke-width="1"/><path d="M148 797.8 L151.6 801.5 L155.2 797.8" fill="none" stroke="#bdbdbd" stroke-width="1"/><path d="M60.13 794.17 L60.91 794.56 L61.61 795.05 L62.22 795.64 L62.72 796.32 L63.11 797.05 L63.37 797.83 L63.51 798.63 L63.53 799.43 L63.42 800.21 L63.19 800.97 L62.86 801.66 L62.42 802.29 L61.90 802.84 L61.30 803.30 L60.65 803.65 L59.96 803.89 L59.25 804.02 L58.54 804.04 L57.85 803.95 L57.18 803.75 L56.56 803.46 L56.00 803.08 L55.52 802.62 L55.12 802.10 L54.80 801.53 L54.59 800.93 L54.47 800.31 L54.45 799.69 L54.53 799.09 L54.69 798.51 L54.95 797.97 L55.27 797.48 L55.67 797.06 L56.11 796.72 L56.60 796.45 L57.12 796.26 L57.65 796.16 L58.18 796.14 L58.69 796.20 L59.19 796.35 L59.64 796.56 L60.05 796.84 L60.40 797.17 L60.70 797.55 L60.92 797.96 L61.08 798.39 L61.16 798.83 L61.17 799.27 L61.11 799.69 L60.99 800.10 L60.82 800.47 L60.59 800.80 L60.31 801.09 L60.01 801.32 L59.67 801.50 L59.32 801.62 L58.97 801.68 L58.62 801.68 L58.28 801.63 L57.97 801.53 L57.68 801.38 L57.43 801.20 L57.21 800.98 L57.04 800.74 L56.91 800.48 L56.83 800.22 L56.80 799.95 L56.81 799.69 L56.85 799.44 L56.94 799.22 L57.06 799.01 L57.20 798.84 L57.36 798.70 L57.54 798.59 L57.72 798.52 L57.91 798.48 L58.09 798.47 L58.26 798.49 L58.42 798.54 L58.56 798.61" fill="none" stroke="#bdbdbd" stroke-width="1.15" stroke-linecap="round"/><text clip-path="url(#nameclip)" x="78.4" y="803.5" font-family="Liberation Sans" font-size="11" fill="#b9bccb" letter-spacing="-0.2">None</text>
<rect x="0" y="809.5" width="42.8" height="14.3" fill="#1b1b1b"/><rect x="42.8" y="809.5" width="28" height="14.3" fill="#2d2d2d"/><rect x="70.8" y="809.5" width="89.5" height="14.3" fill="#1b1b1b"/><rect x="160.3" y="809.5" width="3" height="14.3" fill="#2d2d2d"/><rect x="0" y="823.8" width="163.3" height="1" fill="#2e2e2e"/><rect x="0" y="824.8" width="163.3" height="1.7" fill="#1e1e1e"/><text x="-1.4" y="820.5" font-family="Liberation Sans" font-size="11" fill="#b9bccb">ne</text><path d="M30.8 814.8 L34.4 818.5 L38 814.8" fill="none" stroke="#bdbdbd" stroke-width="1"/><path d="M148 814.8 L151.6 818.5 L155.2 814.8" fill="none" stroke="#bdbdbd" stroke-width="1"/><path d="M60.13 811.17 L60.91 811.56 L61.61 812.05 L62.22 812.64 L62.72 813.32 L63.11 814.05 L63.37 814.83 L63.51 815.63 L63.53 816.43 L63.42 817.21 L63.19 817.97 L62.86 818.66 L62.42 819.29 L61.90 819.84 L61.30 820.30 L60.65 820.65 L59.96 820.89 L59.25 821.02 L58.54 821.04 L57.85 820.95 L57.18 820.75 L56.56 820.46 L56.00 820.08 L55.52 819.62 L55.12 819.10 L54.80 818.53 L54.59 817.93 L54.47 817.31 L54.45 816.69 L54.53 816.09 L54.69 815.51 L54.95 814.97 L55.27 814.48 L55.67 814.06 L56.11 813.72 L56.60 813.45 L57.12 813.26 L57.65 813.16 L58.18 813.14 L58.69 813.20 L59.19 813.35 L59.64 813.56 L60.05 813.84 L60.40 814.17 L60.70 814.55 L60.92 814.96 L61.08 815.39 L61.16 815.83 L61.17 816.27 L61.11 816.69 L60.99 817.10 L60.82 817.47 L60.59 817.80 L60.31 818.09 L60.01 818.32 L59.67 818.50 L59.32 818.62 L58.97 818.68 L58.62 818.68 L58.28 818.63 L57.97 818.53 L57.68 818.38 L57.43 818.20 L57.21 817.98 L57.04 817.74 L56.91 817.48 L56.83 817.22 L56.80 816.95 L56.81 816.69 L56.85 816.44 L56.94 816.22 L57.06 816.01 L57.20 815.84 L57.36 815.70 L57.54 815.59 L57.72 815.52 L57.91 815.48 L58.09 815.47 L58.26 815.49 L58.42 815.54 L58.56 815.61" fill="none" stroke="#bdbdbd" stroke-width="1.15" stroke-linecap="round"/><text clip-path="url(#nameclip)" x="78.4" y="820.5" font-family="Liberation Sans" font-size="11" fill="#b9bccb" letter-spacing="-0.45">7. R_Arm 2::W</text>
<rect x="0" y="826.5" width="42.8" height="14.3" fill="#1b1b1b"/><rect x="42.8" y="826.5" width="28" height="14.3" fill="#2d2d2d"/><rect x="70.8" y="826.5" width="89.5" height="14.3" fill="#1b1b1b"/><rect x="160.3" y="826.5" width="3" height="14.3" fill="#2d2d2d"/><rect x="0" y="840.8" width="163.3" height="1" fill="#2e2e2e"/><rect x="0" y="841.8" width="163.3" height="1.7" fill="#1e1e1e"/><text x="-1.4" y="837.5" font-family="Liberation Sans" font-size="11" fill="#b9bccb">ne</text><path d="M30.8 831.8 L34.4 835.5 L38 831.8" fill="none" stroke="#bdbdbd" stroke-width="1"/><path d="M148 831.8 L151.6 835.5 L155.2 831.8" fill="none" stroke="#bdbdbd" stroke-width="1"/><path d="M60.13 828.17 L60.91 828.56 L61.61 829.05 L62.22 829.64 L62.72 830.32 L63.11 831.05 L63.37 831.83 L63.51 832.63 L63.53 833.43 L63.42 834.21 L63.19 834.97 L62.86 835.66 L62.42 836.29 L61.90 836.84 L61.30 837.30 L60.65 837.65 L59.96 837.89 L59.25 838.02 L58.54 838.04 L57.85 837.95 L57.18 837.75 L56.56 837.46 L56.00 837.08 L55.52 836.62 L55.12 836.10 L54.80 835.53 L54.59 834.93 L54.47 834.31 L54.45 833.69 L54.53 833.09 L54.69 832.51 L54.95 831.97 L55.27 831.48 L55.67 831.06 L56.11 830.72 L56.60 830.45 L57.12 830.26 L57.65 830.16 L58.18 830.14 L58.69 830.20 L59.19 830.35 L59.64 830.56 L60.05 830.84 L60.40 831.17 L60.70 831.55 L60.92 831.96 L61.08 832.39 L61.16 832.83 L61.17 833.27 L61.11 833.69 L60.99 834.10 L60.82 834.47 L60.59 834.80 L60.31 835.09 L60.01 835.32 L59.67 835.50 L59.32 835.62 L58.97 835.68 L58.62 835.68 L58.28 835.63 L57.97 835.53 L57.68 835.38 L57.43 835.20 L57.21 834.98 L57.04 834.74 L56.91 834.48 L56.83 834.22 L56.80 833.95 L56.81 833.69 L56.85 833.44 L56.94 833.22 L57.06 833.01 L57.20 832.84 L57.36 832.70 L57.54 832.59 L57.72 832.52 L57.91 832.48 L58.09 832.47 L58.26 832.49 L58.42 832.54 L58.56 832.61" fill="none" stroke="#bdbdbd" stroke-width="1.15" stroke-linecap="round"/><text clip-path="url(#nameclip)" x="78.4" y="837.5" font-family="Liberation Sans" font-size="11" fill="#b9bccb" letter-spacing="-0.2">None</text>
<rect x="0" y="843.5" width="42.8" height="14.3" fill="#1b1b1b"/><rect x="42.8" y="843.5" width="28" height="14.3" fill="#2d2d2d"/><rect x="70.8" y="843.5" width="89.5" height="14.3" fill="#1b1b1b"/><rect x="160.3" y="843.5" width="3" height="14.3" fill="#2d2d2d"/><rect x="0" y="857.8" width="163.3" height="1" fill="#2e2e2e"/><rect x="0" y="858.8" width="163.3" height="1.7" fill="#1e1e1e"/><text x="-1.4" y="854.5" font-family="Liberation Sans" font-size="11" fill="#b9bccb">ne</text><path d="M30.8 848.8 L34.4 852.5 L38 848.8" fill="none" stroke="#bdbdbd" stroke-width="1"/><path d="M148 848.8 L151.6 852.5 L155.2 848.8" fill="none" stroke="#bdbdbd" stroke-width="1"/><path d="M60.13 845.17 L60.91 845.56 L61.61 846.05 L62.22 846.64 L62.72 847.32 L63.11 848.05 L63.37 848.83 L63.51 849.63 L63.53 850.43 L63.42 851.21 L63.19 851.97 L62.86 852.66 L62.42 853.29 L61.90 853.84 L61.30 854.30 L60.65 854.65 L59.96 854.89 L59.25 855.02 L58.54 855.04 L57.85 854.95 L57.18 854.75 L56.56 854.46 L56.00 854.08 L55.52 853.62 L55.12 853.10 L54.80 852.53 L54.59 851.93 L54.47 851.31 L54.45 850.69 L54.53 850.09 L54.69 849.51 L54.95 848.97 L55.27 848.48 L55.67 848.06 L56.11 847.72 L56.60 847.45 L57.12 847.26 L57.65 847.16 L58.18 847.14 L58.69 847.20 L59.19 847.35 L59.64 847.56 L60.05 847.84 L60.40 848.17 L60.70 848.55 L60.92 848.96 L61.08 849.39 L61.16 849.83 L61.17 850.27 L61.11 850.69 L60.99 851.10 L60.82 851.47 L60.59 851.80 L60.31 852.09 L60.01 852.32 L59.67 852.50 L59.32 852.62 L58.97 852.68 L58.62 852.68 L58.28 852.63 L57.97 852.53 L57.68 852.38 L57.43 852.20 L57.21 851.98 L57.04 851.74 L56.91 851.48 L56.83 851.22 L56.80 850.95 L56.81 850.69 L56.85 850.44 L56.94 850.22 L57.06 850.01 L57.20 849.84 L57.36 849.70 L57.54 849.59 L57.72 849.52 L57.91 849.48 L58.09 849.47 L58.26 849.49 L58.42 849.54 L58.56 849.61" fill="none" stroke="#bdbdbd" stroke-width="1.15" stroke-linecap="round"/><text clip-path="url(#nameclip)" x="78.4" y="854.5" font-family="Liberation Sans" font-size="11" fill="#b9bccb" letter-spacing="-0.2">None</text>
<rect x="0" y="860.5" width="42.8" height="14.3" fill="#1b1b1b"/><rect x="42.8" y="860.5" width="28" height="14.3" fill="#2d2d2d"/><rect x="70.8" y="860.5" width="89.5" height="14.3" fill="#1b1b1b"/><rect x="160.3" y="860.5" width="3" height="14.3" fill="#2d2d2d"/><rect x="0" y="874.8" width="163.3" height="1" fill="#2e2e2e"/><rect x="0" y="875.8" width="163.3" height="1.7" fill="#1e1e1e"/><text x="-1.4" y="871.5" font-family="Liberation Sans" font-size="11" fill="#b9bccb">ne</text><path d="M30.8 865.8 L34.4 869.5 L38 865.8" fill="none" stroke="#bdbdbd" stroke-width="1"/><path d="M148 865.8 L151.6 869.5 L155.2 865.8" fill="none" stroke="#bdbdbd" stroke-width="1"/><path d="M60.13 862.17 L60.91 862.56 L61.61 863.05 L62.22 863.64 L62.72 864.32 L63.11 865.05 L63.37 865.83 L63.51 866.63 L63.53 867.43 L63.42 868.21 L63.19 868.97 L62.86 869.66 L62.42 870.29 L61.90 870.84 L61.30 871.30 L60.65 871.65 L59.96 871.89 L59.25 872.02 L58.54 872.04 L57.85 871.95 L57.18 871.75 L56.56 871.46 L56.00 871.08 L55.52 870.62 L55.12 870.10 L54.80 869.53 L54.59 868.93 L54.47 868.31 L54.45 867.69 L54.53 867.09 L54.69 866.51 L54.95 865.97 L55.27 865.48 L55.67 865.06 L56.11 864.72 L56.60 864.45 L57.12 864.26 L57.65 864.16 L58.18 864.14 L58.69 864.20 L59.19 864.35 L59.64 864.56 L60.05 864.84 L60.40 865.17 L60.70 865.55 L60.92 865.96 L61.08 866.39 L61.16 866.83 L61.17 867.27 L61.11 867.69 L60.99 868.10 L60.82 868.47 L60.59 868.80 L60.31 869.09 L60.01 869.32 L59.67 869.50 L59.32 869.62 L58.97 869.68 L58.62 869.68 L58.28 869.63 L57.97 869.53 L57.68 869.38 L57.43 869.20 L57.21 868.98 L57.04 868.74 L56.91 868.48 L56.83 868.22 L56.80 867.95 L56.81 867.69 L56.85 867.44 L56.94 867.22 L57.06 867.01 L57.20 866.84 L57.36 866.70 L57.54 866.59 L57.72 866.52 L57.91 866.48 L58.09 866.47 L58.26 866.49 L58.42 866.54 L58.56 866.61" fill="none" stroke="#bdbdbd" stroke-width="1.15" stroke-linecap="round"/><text clip-path="url(#nameclip)" x="78.4" y="871.5" font-family="Liberation Sans" font-size="11" fill="#b9bccb" letter-spacing="-0.2">None</text>
<rect x="0" y="877.5" width="42.8" height="14.3" fill="#1b1b1b"/><rect x="42.8" y="877.5" width="28" height="14.3" fill="#2d2d2d"/><rect x="70.8" y="877.5" width="89.5" height="14.3" fill="#1b1b1b"/><rect x="160.3" y="877.5" width="3" height="14.3" fill="#2d2d2d"/><rect x="0" y="891.8" width="163.3" height="1" fill="#2e2e2e"/><rect x="0" y="892.8" width="163.3" height="1.7" fill="#1e1e1e"/><text x="-1.4" y="888.5" font-family="Liberation Sans" font-size="11" fill="#b9bccb">ne</text><path d="M30.8 882.8 L34.4 886.5 L38 882.8" fill="none" stroke="#bdbdbd" stroke-width="1"/><path d="M148 882.8 L151.6 886.5 L155.2 882.8" fill="none" stroke="#bdbdbd" stroke-width="1"/><path d="M60.13 879.17 L60.91 879.56 L61.61 880.05 L62.22 880.64 L62.72 881.32 L63.11 882.05 L63.37 882.83 L63.51 883.63 L63.53 884.43 L63.42 885.21 L63.19 885.97 L62.86 886.66 L62.42 887.29 L61.90 887.84 L61.30 888.30 L60.65 888.65 L59.96 888.89 L59.25 889.02 L58.54 889.04 L57.85 888.95 L57.18 888.75 L56.56 888.46 L56.00 888.08 L55.52 887.62 L55.12 887.10 L54.80 886.53 L54.59 885.93 L54.47 885.31 L54.45 884.69 L54.53 884.09 L54.69 883.51 L54.95 882.97 L55.27 882.48 L55.67 882.06 L56.11 881.72 L56.60 881.45 L57.12 881.26 L57.65 881.16 L58.18 881.14 L58.69 881.20 L59.19 881.35 L59.64 881.56 L60.05 881.84 L60.40 882.17 L60.70 882.55 L60.92 882.96 L61.08 883.39 L61.16 883.83 L61.17 884.27 L61.11 884.69 L60.99 885.10 L60.82 885.47 L60.59 885.80 L60.31 886.09 L60.01 886.32 L59.67 886.50 L59.32 886.62 L58.97 886.68 L58.62 886.68 L58.28 886.63 L57.97 886.53 L57.68 886.38 L57.43 886.20 L57.21 885.98 L57.04 885.74 L56.91 885.48 L56.83 885.22 L56.80 884.95 L56.81 884.69 L56.85 884.44 L56.94 884.22 L57.06 884.01 L57.20 883.84 L57.36 883.70 L57.54 883.59 L57.72 883.52 L57.91 883.48 L58.09 883.47 L58.26 883.49 L58.42 883.54 L58.56 883.61" fill="none" stroke="#bdbdbd" stroke-width="1.15" stroke-linecap="round"/><text clip-path="url(#nameclip)" x="78.4" y="888.5" font-family="Liberation Sans" font-size="11" fill="#b9bccb" letter-spacing="-0.45">11. L_Arm 2::W</text>
<rect x="0" y="894.5" width="42.8" height="14.3" fill="#1b1b1b"/><rect x="42.8" y="894.5" width="28" height="14.3" fill="#2d2d2d"/><rect x="70.8" y="894.5" width="89.5" height="14.3" fill="#1b1b1b"/><rect x="160.3" y="894.5" width="3" height="14.3" fill="#2d2d2d"/><rect x="0" y="908.8" width="163.3" height="1" fill="#2e2e2e"/><rect x="0" y="909.8" width="163.3" height="1.7" fill="#1e1e1e"/><text x="-1.4" y="905.5" font-family="Liberation Sans" font-size="11" fill="#b9bccb">ne</text><path d="M30.8 899.8 L34.4 903.5 L38 899.8" fill="none" stroke="#bdbdbd" stroke-width="1"/><path d="M148 899.8 L151.6 903.5 L155.2 899.8" fill="none" stroke="#bdbdbd" stroke-width="1"/><path d="M60.13 896.17 L60.91 896.56 L61.61 897.05 L62.22 897.64 L62.72 898.32 L63.11 899.05 L63.37 899.83 L63.51 900.63 L63.53 901.43 L63.42 902.21 L63.19 902.97 L62.86 903.66 L62.42 904.29 L61.90 904.84 L61.30 905.30 L60.65 905.65 L59.96 905.89 L59.25 906.02 L58.54 906.04 L57.85 905.95 L57.18 905.75 L56.56 905.46 L56.00 905.08 L55.52 904.62 L55.12 904.10 L54.80 903.53 L54.59 902.93 L54.47 902.31 L54.45 901.69 L54.53 901.09 L54.69 900.51 L54.95 899.97 L55.27 899.48 L55.67 899.06 L56.11 898.72 L56.60 898.45 L57.12 898.26 L57.65 898.16 L58.18 898.14 L58.69 898.20 L59.19 898.35 L59.64 898.56 L60.05 898.84 L60.40 899.17 L60.70 899.55 L60.92 899.96 L61.08 900.39 L61.16 900.83 L61.17 901.27 L61.11 901.69 L60.99 902.10 L60.82 902.47 L60.59 902.80 L60.31 903.09 L60.01 903.32 L59.67 903.50 L59.32 903.62 L58.97 903.68 L58.62 903.68 L58.28 903.63 L57.97 903.53 L57.68 903.38 L57.43 903.20 L57.21 902.98 L57.04 902.74 L56.91 902.48 L56.83 902.22 L56.80 901.95 L56.81 901.69 L56.85 901.44 L56.94 901.22 L57.06 901.01 L57.20 900.84 L57.36 900.70 L57.54 900.59 L57.72 900.52 L57.91 900.48 L58.09 900.47 L58.26 900.49 L58.42 900.54 L58.56 900.61" fill="none" stroke="#bdbdbd" stroke-width="1.15" stroke-linecap="round"/><text clip-path="url(#nameclip)" x="78.4" y="905.5" font-family="Liberation Sans" font-size="11" fill="#b9bccb" letter-spacing="-0.2">None</text>
<rect x="0" y="911.5" width="42.8" height="14.3" fill="#1b1b1b"/><rect x="42.8" y="911.5" width="28" height="14.3" fill="#2d2d2d"/><rect x="70.8" y="911.5" width="89.5" height="14.3" fill="#1b1b1b"/><rect x="160.3" y="911.5" width="3" height="14.3" fill="#2d2d2d"/><rect x="0" y="925.8" width="163.3" height="1" fill="#2e2e2e"/><rect x="0" y="926.8" width="163.3" height="1.7" fill="#1e1e1e"/><text x="-1.4" y="922.5" font-family="Liberation Sans" font-size="11" fill="#b9bccb">ne</text><path d="M30.8 916.8 L34.4 920.5 L38 916.8" fill="none" stroke="#bdbdbd" stroke-width="1"/><path d="M148 916.8 L151.6 920.5 L155.2 916.8" fill="none" stroke="#bdbdbd" stroke-width="1"/><path d="M60.13 913.17 L60.91 913.56 L61.61 914.05 L62.22 914.64 L62.72 915.32 L63.11 916.05 L63.37 916.83 L63.51 917.63 L63.53 918.43 L63.42 919.21 L63.19 919.97 L62.86 920.66 L62.42 921.29 L61.90 921.84 L61.30 922.30 L60.65 922.65 L59.96 922.89 L59.25 923.02 L58.54 923.04 L57.85 922.95 L57.18 922.75 L56.56 922.46 L56.00 922.08 L55.52 921.62 L55.12 921.10 L54.80 920.53 L54.59 919.93 L54.47 919.31 L54.45 918.69 L54.53 918.09 L54.69 917.51 L54.95 916.97 L55.27 916.48 L55.67 916.06 L56.11 915.72 L56.60 915.45 L57.12 915.26 L57.65 915.16 L58.18 915.14 L58.69 915.20 L59.19 915.35 L59.64 915.56 L60.05 915.84 L60.40 916.17 L60.70 916.55 L60.92 916.96 L61.08 917.39 L61.16 917.83 L61.17 918.27 L61.11 918.69 L60.99 919.10 L60.82 919.47 L60.59 919.80 L60.31 920.09 L60.01 920.32 L59.67 920.50 L59.32 920.62 L58.97 920.68 L58.62 920.68 L58.28 920.63 L57.97 920.53 L57.68 920.38 L57.43 920.20 L57.21 919.98 L57.04 919.74 L56.91 919.48 L56.83 919.22 L56.80 918.95 L56.81 918.69 L56.85 918.44 L56.94 918.22 L57.06 918.01 L57.20 917.84 L57.36 917.70 L57.54 917.59 L57.72 917.52 L57.91 917.48 L58.09 917.47 L58.26 917.49 L58.42 917.54 L58.56 917.61" fill="none" stroke="#bdbdbd" stroke-width="1.15" stroke-linecap="round"/><text clip-path="url(#nameclip)" x="78.4" y="922.5" font-family="Liberation Sans" font-size="11" fill="#b9bccb" letter-spacing="-0.2">None</text>
<rect x="0" y="928.5" width="42.8" height="14.3" fill="#1b1b1b"/><rect x="42.8" y="928.5" width="28" height="14.3" fill="#2d2d2d"/><rect x="70.8" y="928.5" width="89.5" height="14.3" fill="#1b1b1b"/><rect x="160.3" y="928.5" width="3" height="14.3" fill="#2d2d2d"/><rect x="0" y="942.8" width="163.3" height="1" fill="#2e2e2e"/><rect x="0" y="943.8" width="163.3" height="1.7" fill="#1e1e1e"/><text x="-1.4" y="939.5" font-family="Liberation Sans" font-size="11" fill="#b9bccb">ne</text><path d="M30.8 933.8 L34.4 937.5 L38 933.8" fill="none" stroke="#bdbdbd" stroke-width="1"/><path d="M148 933.8 L151.6 937.5 L155.2 933.8" fill="none" stroke="#bdbdbd" stroke-width="1"/><path d="M60.13 930.17 L60.91 930.56 L61.61 931.05 L62.22 931.64 L62.72 932.32 L63.11 933.05 L63.37 933.83 L63.51 934.63 L63.53 935.43 L63.42 936.21 L63.19 936.97 L62.86 937.66 L62.42 938.29 L61.90 938.84 L61.30 939.30 L60.65 939.65 L59.96 939.89 L59.25 940.02 L58.54 940.04 L57.85 939.95 L57.18 939.75 L56.56 939.46 L56.00 939.08 L55.52 938.62 L55.12 938.10 L54.80 937.53 L54.59 936.93 L54.47 936.31 L54.45 935.69 L54.53 935.09 L54.69 934.51 L54.95 933.97 L55.27 933.48 L55.67 933.06 L56.11 932.72 L56.60 932.45 L57.12 932.26 L57.65 932.16 L58.18 932.14 L58.69 932.20 L59.19 932.35 L59.64 932.56 L60.05 932.84 L60.40 933.17 L60.70 933.55 L60.92 933.96 L61.08 934.39 L61.16 934.83 L61.17 935.27 L61.11 935.69 L60.99 936.10 L60.82 936.47 L60.59 936.80 L60.31 937.09 L60.01 937.32 L59.67 937.50 L59.32 937.62 L58.97 937.68 L58.62 937.68 L58.28 937.63 L57.97 937.53 L57.68 937.38 L57.43 937.20 L57.21 936.98 L57.04 936.74 L56.91 936.48 L56.83 936.22 L56.80 935.95 L56.81 935.69 L56.85 935.44 L56.94 935.22 L57.06 935.01 L57.20 934.84 L57.36 934.70 L57.54 934.59 L57.72 934.52 L57.91 934.48 L58.09 934.47 L58.26 934.49 L58.42 934.54 L58.56 934.61" fill="none" stroke="#bdbdbd" stroke-width="1.15" stroke-linecap="round"/><text clip-path="url(#nameclip)" x="78.4" y="939.5" font-family="Liberation Sans" font-size="11" fill="#b9bccb" letter-spacing="-0.2">None</text>
<rect x="0" y="945.5" width="42.8" height="14.3" fill="#1b1b1b"/><rect x="42.8" y="945.5" width="28" height="14.3" fill="#2d2d2d"/><rect x="70.8" y="945.5" width="89.5" height="14.3" fill="#1b1b1b"/><rect x="160.3" y="945.5" width="3" height="14.3" fill="#2d2d2d"/><rect x="0" y="959.8" width="163.3" height="1" fill="#2e2e2e"/><rect x="0" y="960.8" width="163.3" height="1.7" fill="#1e1e1e"/><text x="-1.4" y="956.5" font-family="Liberation Sans" font-size="11" fill="#b9bccb">ne</text><path d="M30.8 950.8 L34.4 954.5 L38 950.8" fill="none" stroke="#bdbdbd" stroke-width="1"/><path d="M148 950.8 L151.6 954.5 L155.2 950.8" fill="none" stroke="#bdbdbd" stroke-width="1"/><path d="M60.13 947.17 L60.91 947.56 L61.61 948.05 L62.22 948.64 L62.72 949.32 L63.11 950.05 L63.37 950.83 L63.51 951.63 L63.53 952.43 L63.42 953.21 L63.19 953.97 L62.86 954.66 L62.42 955.29 L61.90 955.84 L61.30 956.30 L60.65 956.65 L59.96 956.89 L59.25 957.02 L58.54 957.04 L57.85 956.95 L57.18 956.75 L56.56 956.46 L56.00 956.08 L55.52 955.62 L55.12 955.10 L54.80 954.53 L54.59 953.93 L54.47 953.31 L54.45 952.69 L54.53 952.09 L54.69 951.51 L54.95 950.97 L55.27 950.48 L55.67 950.06 L56.11 949.72 L56.60 949.45 L57.12 949.26 L57.65 949.16 L58.18 949.14 L58.69 949.20 L59.19 949.35 L59.64 949.56 L60.05 949.84 L60.40 950.17 L60.70 950.55 L60.92 950.96 L61.08 951.39 L61.16 951.83 L61.17 952.27 L61.11 952.69 L60.99 953.10 L60.82 953.47 L60.59 953.80 L60.31 954.09 L60.01 954.32 L59.67 954.50 L59.32 954.62 L58.97 954.68 L58.62 954.68 L58.28 954.63 L57.97 954.53 L57.68 954.38 L57.43 954.20 L57.21 953.98 L57.04 953.74 L56.91 953.48 L56.83 953.22 L56.80 952.95 L56.81 952.69 L56.85 952.44 L56.94 952.22 L57.06 952.01 L57.20 951.84 L57.36 951.70 L57.54 951.59 L57.72 951.52 L57.91 951.48 L58.09 951.47 L58.26 951.49 L58.42 951.54 L58.56 951.61" fill="none" stroke="#bdbdbd" stroke-width="1.15" stroke-linecap="round"/><text clip-path="url(#nameclip)" x="78.4" y="956.5" font-family="Liberation Sans" font-size="11" fill="#b9bccb" letter-spacing="-0.2">None</text>
<rect x="0" y="962.5" width="42.8" height="14.3" fill="#1b1b1b"/><rect x="42.8" y="962.5" width="28" height="14.3" fill="#2d2d2d"/><rect x="70.8" y="962.5" width="89.5" height="14.3" fill="#1b1b1b"/><rect x="160.3" y="962.5" width="3" height="14.3" fill="#2d2d2d"/><rect x="0" y="976.8" width="163.3" height="1" fill="#2e2e2e"/><rect x="0" y="977.8" width="163.3" height="1.7" fill="#1e1e1e"/><text x="-1.4" y="973.5" font-family="Liberation Sans" font-size="11" fill="#b9bccb">ne</text><path d="M30.8 967.8 L34.4 971.5 L38 967.8" fill="none" stroke="#bdbdbd" stroke-width="1"/><path d="M148 967.8 L151.6 971.5 L155.2 967.8" fill="none" stroke="#bdbdbd" stroke-width="1"/><path d="M60.13 964.17 L60.91 964.56 L61.61 965.05 L62.22 965.64 L62.72 966.32 L63.11 967.05 L63.37 967.83 L63.51 968.63 L63.53 969.43 L63.42 970.21 L63.19 970.97 L62.86 971.66 L62.42 972.29 L61.90 972.84 L61.30 973.30 L60.65 973.65 L59.96 973.89 L59.25 974.02 L58.54 974.04 L57.85 973.95 L57.18 973.75 L56.56 973.46 L56.00 973.08 L55.52 972.62 L55.12 972.10 L54.80 971.53 L54.59 970.93 L54.47 970.31 L54.45 969.69 L54.53 969.09 L54.69 968.51 L54.95 967.97 L55.27 967.48 L55.67 967.06 L56.11 966.72 L56.60 966.45 L57.12 966.26 L57.65 966.16 L58.18 966.14 L58.69 966.20 L59.19 966.35 L59.64 966.56 L60.05 966.84 L60.40 967.17 L60.70 967.55 L60.92 967.96 L61.08 968.39 L61.16 968.83 L61.17 969.27 L61.11 969.69 L60.99 970.10 L60.82 970.47 L60.59 970.80 L60.31 971.09 L60.01 971.32 L59.67 971.50 L59.32 971.62 L58.97 971.68 L58.62 971.68 L58.28 971.63 L57.97 971.53 L57.68 971.38 L57.43 971.20 L57.21 970.98 L57.04 970.74 L56.91 970.48 L56.83 970.22 L56.80 969.95 L56.81 969.69 L56.85 969.44 L56.94 969.22 L57.06 969.01 L57.20 968.84 L57.36 968.70 L57.54 968.59 L57.72 968.52 L57.91 968.48 L58.09 968.47 L58.26 968.49 L58.42 968.54 L58.56 968.61" fill="none" stroke="#bdbdbd" stroke-width="1.15" stroke-linecap="round"/><text clip-path="url(#nameclip)" x="78.4" y="973.5" font-family="Liberation Sans" font-size="11" fill="#b9bccb" letter-spacing="-0.2">None</text>
<rect x="145" y="775" width="3" height="203" fill="none"/>
<rect x="163.3" y="775.3" width="16.7" height="203" fill="#1d1d1d"/>
<rect x="164.2" y="801.2" width="14.8" height="49.5" rx="7.4" fill="#333333"/>
</svg>

<svg width="747" height="997" style="left:0;top:0">
<rect x="180" y="692" width="567" height="255" fill="#222222"/>
<rect x="180" y="724.6" width="567" height="1" fill="#161616"/>
<rect x="180" y="724.6" width="1.2" height="50" fill="#181818"/>
<rect x="186" y="726" width="208" height="8" fill="#646464"/><rect x="186" y="726" width="208" height="0.8" fill="#787878"/>
<path d="M187 726 V734 H185 A4 4 0 0 1 181 730 A4 4 0 0 1 185 726 Z" fill="#2f8ef0"/>
<path d="M392 726 V734 H394 A4 4 0 0 0 398 730 A4 4 0 0 0 394 726 Z" fill="#2f8ef0"/>
<rect x="210" y="726" width="1.3" height="8" fill="#2f8ef0"/>
<rect x="187" y="726" width="0.8" height="8" fill="#1a1a1a"/><rect x="391.5" y="726" width="0.8" height="8" fill="#1a1a1a"/>
<defs><clipPath id="tlc"><rect x="181.3" y="690" width="567" height="300"/></clipPath></defs>
<g clip-path="url(#tlc)">
<g font-family="Liberation Sans" font-size="9.6" fill="#c2c2c2" text-anchor="middle" letter-spacing="-0.1">
<text x="187.4" y="745.7">00:00f</text><rect x="188.1" y="746.8" width="1" height="13" fill="#b0b0b0"/><text x="241.4" y="745.7">00:15f</text><rect x="242.1" y="746.8" width="1" height="13" fill="#b0b0b0"/><text x="295.4" y="745.7">01:00f</text><rect x="296.1" y="746.8" width="1" height="13" fill="#b0b0b0"/><text x="349.4" y="745.7">01:15f</text><rect x="350.1" y="746.8" width="1" height="13" fill="#b0b0b0"/><text x="403.4" y="745.7">02:00f</text><rect x="404.1" y="746.8" width="1" height="13" fill="#b0b0b0"/><text x="457.4" y="745.7">02:15f</text><rect x="458.1" y="746.8" width="1" height="13" fill="#b0b0b0"/><text x="511.4" y="745.7">03:00f</text><rect x="512.1" y="746.8" width="1" height="13" fill="#b0b0b0"/><text x="565.4" y="745.7">03:15f</text><rect x="566.1" y="746.8" width="1" height="13" fill="#b0b0b0"/><text x="619.4" y="745.7">04:00f</text><rect x="620.1" y="746.8" width="1" height="13" fill="#b0b0b0"/><text x="673.4" y="745.7">04:15f</text><rect x="674.1" y="746.8" width="1" height="13" fill="#b0b0b0"/><text x="727.4" y="745.7">05:00f</text><rect x="728.1" y="746.8" width="1" height="13" fill="#b0b0b0"/></g>
<rect x="180" y="754" width="148" height="1.2" fill="#121212"/>
<rect x="186" y="755.3" width="136" height="14.5" fill="#6c6c6c"/>
<path d="M187 755.3 V769.8 H186 A5 5 0 0 1 181 764.8 V760.3 A5 5 0 0 1 186 755.3 Z" fill="#2f8ef0"/>
<rect x="321" y="755.3" width="1" height="14.5" fill="#161616"/><rect x="186.8" y="755.3" width="1" height="14.5" fill="#161616"/>
<path d="M322 755.3 V769.8 H322 A5 5 0 0 0 327 764.8 V760.3 A5 5 0 0 0 322 755.3 Z" fill="#2f8ef0"/>
<rect x="180" y="770" width="567" height="1" fill="#141414"/>
<rect x="180" y="771" width="567" height="3.5" fill="#262626"/>
<rect x="260" y="771.3" width="345" height="3" fill="#27c427"/>
<rect x="180" y="774.3" width="567" height="1" fill="#161616"/>
<rect x="180" y="775.3" width="9" height="171.5" fill="#2a2a2a"/><rect x="180" y="775.3" width="1" height="171.5" fill="#181818"/>
<rect x="189" y="775.3" width="132.5" height="171.5" fill="#343434"/>
<rect x="321.5" y="775.3" width="425.5" height="171.5" fill="#282828"/>
<rect x="188.0" y="775.3" width="1" height="171.5" fill="#1f1f1f"/><rect x="242.0" y="775.3" width="1" height="171.5" fill="#1f1f1f"/><rect x="296.0" y="775.3" width="1" height="171.5" fill="#1f1f1f"/><rect x="350.0" y="775.3" width="1" height="171.5" fill="#1f1f1f"/><rect x="404.0" y="775.3" width="1" height="171.5" fill="#1f1f1f"/><rect x="458.0" y="775.3" width="1" height="171.5" fill="#1f1f1f"/><rect x="512.0" y="775.3" width="1" height="171.5" fill="#1f1f1f"/><rect x="566.0" y="775.3" width="1" height="171.5" fill="#1f1f1f"/><rect x="620.0" y="775.3" width="1" height="171.5" fill="#1f1f1f"/><rect x="674.0" y="775.3" width="1" height="171.5" fill="#1f1f1f"/><rect x="728.0" y="775.3" width="1" height="171.5" fill="#1f1f1f"/>
<rect x="180" y="786" width="567" height="1" fill="#202020"/>
<rect x="180" y="861" width="567" height="1" fill="#202020"/>
<rect x="180" y="934.3" width="567" height="1.8" fill="#1b1b1b"/>
<g font-family="Liberation Sans" font-size="10" fill="#c2c2c2">
<text x="190.5" y="783.7">100</text><text x="190.2" y="857.1">50</text><text x="190.2" y="931">0</text>
</g>
<rect x="273.8" y="749" width="1.2" height="197.5" fill="#2f8ef0"/>
<path d="M269 739.8 H280 V746.6 L274.5 753.5 L269 746.6 Z" fill="#3590f0"/>
<rect x="272.8" y="746" width="3.4" height="1.1" fill="#1a1a1a"/><rect x="274" y="746" width="1" height="7" fill="#1a1a1a"/>
</g>
</svg>

<svg width="747" height="997" style="left:0;top:0">
<rect x="180" y="946.8" width="567" height="30.5" fill="#222222"/>
<rect x="0" y="977.3" width="288.5" height="1.6" fill="#111111"/>
<rect x="0" y="978.9" width="747" height="18.1" fill="#1e1e1e"/>
<rect x="0" y="978.9" width="288.5" height="18.1" fill="#232323"/>
<rect x="163.3" y="946.8" width="16.7" height="30.5" fill="#1f1f1f"/>
<!-- eye -->
<path d="M359 966 Q367.5 957.5 376 966 Q367.5 974.5 359 966 Z" fill="#c4c4c4"/>
<circle cx="367.5" cy="966" r="3.4" fill="#222"/>
<circle cx="368.6" cy="964.8" r="0.9" fill="#c4c4c4"/>
<path d="M371.8 972.6 H376.4 L374.1 975 Z" fill="#c4c4c4"/>
<!-- list -->
<rect x="385.6" y="959.6" width="12.4" height="10.6" fill="none" stroke="#c4c4c4" stroke-width="1.2"/>
<g fill="#c4c4c4"><rect x="387.8" y="962" width="1.2" height="1.2"/><rect x="387.8" y="964.4" width="1.2" height="1.2"/><rect x="387.8" y="966.8" width="1.2" height="1.2"/>
<rect x="390" y="962" width="6" height="1.2"/><rect x="390" y="964.4" width="6" height="1.2"/><rect x="390" y="966.8" width="6" height="1.2"/></g>
<path d="M396.6 972.6 H401.2 L398.9 975 Z" fill="#c4c4c4"/>
<!-- blue box -->
<rect x="405.8" y="956.8" width="23" height="19.4" rx="2.5" fill="#1a1a1a"/>
<rect x="411.2" y="959.2" width="12.8" height="12.8" fill="none" stroke="#2f8ef0" stroke-width="1.6"/>
<g fill="#2f8ef0"><rect x="409.8" y="958" width="3" height="3"/><rect x="422.4" y="958" width="3" height="3"/><rect x="409.8" y="970.4" width="3" height="3"/><rect x="422.4" y="970.4" width="3" height="3"/>
<rect x="416.3" y="958" width="2.8" height="2.6"/><rect x="416.3" y="970.6" width="2.8" height="2.6"/><rect x="410" y="964.3" width="2.6" height="2.8"/><rect x="422.6" y="964.3" width="2.6" height="2.8"/>
<rect x="417" y="965" width="1.4" height="1.4"/></g>
<!-- magnet -->
<rect x="431" y="956.8" width="23.3" height="19.4" rx="2.5" fill="#1a1a1a"/>
<path d="M435.5 973 V965.5 A6.4 6.4 0 0 1 448.3 965.5 V973 H445.2 V965.5 A3.3 3.3 0 0 0 438.6 965.5 V973 Z" fill="#2f8ef0"/>
<rect x="435.5" y="970" width="3.1" height="3" fill="#1d5aa0"/><rect x="445.2" y="970" width="3.1" height="3" fill="#1d5aa0"/>
<!-- zoom -->
<rect x="480.3" y="956.6" width="24.4" height="19.3" rx="2.5" fill="#1a1a1a"/>
<g fill="none" stroke="#2f8ef0" stroke-width="1.4">
<path d="M484 959.5 V971.5"/>
<path d="M482.2 961.2 L484 959 L485.8 961.2 M482.2 969.8 L484 972 L485.8 969.8"/>
<circle cx="493.8" cy="964.6" r="4.4"/>
<path d="M497 967.8 L501 972.5" stroke-width="1.8"/>
</g>
<!-- dim graph -->
<g fill="none" stroke="#4a4a4a" stroke-width="1.1">
<rect x="509" y="960.5" width="16.5" height="11.8"/>
<path d="M511 963.5 C515 963.5 516 970 520.5 970 H524 M513.5 958.8 V960.5 M518.5 958.8 V960.5 M523 958.8 V960.5"/>
</g>
<g fill="none" stroke="#c4c4c4" stroke-width="1.1">
<rect x="534" y="960.5" width="16.5" height="11.8"/>
<path d="M535.5 964 C540 962 545 967 549.5 964 M535.5 967.5 C540 965.5 545 970.5 549.5 967.5 M538 958.8 V960.5 M542.5 958.8 V960.5 M547 958.8 V960.5 M532.5 964 H534 M532.5 967.5 H534"/>
</g>
<!-- dim x-y -->
<g fill="none" stroke="#4a4a4a" strole-width="1">
<path d="M583 961.5 H588 M592 961.5 H602 M583 969 H587 M593 969 H602 M583 965 C588 962 595 966 602 964.5 M583 971 C588 966 592 968 598 966"/>
</g>
<g font-family="Liberation Sans" font-size="6" fill="#4a4a4a"><text x="588" y="963.5">X</text><text x="596" y="967">Y</text><text x="588.5" y="972.5">Z</text></g>
<!-- diamond -->
<path d="M642.6 959.6 L648.8 965.8 L642.6 972 L636.4 965.8 Z" fill="#474747"/>
<path d="M647 972.6 H651.4 L649.2 975 Z" fill="#474747"/>
<g fill="#474747">
<rect x="659" y="967.4" width="4.6" height="4.6"/><rect x="667" y="959.2" width="4.6" height="4.6"/>
<rect x="685.2" y="967.4" width="4.6" height="4.6"/><rect x="693" y="959.2" width="4.6" height="4.6"/>
<rect x="710" y="959.2" width="4.6" height="4.6"/>
</g>
<g fill="none" stroke="#474747" stroke-width="0.9">
<path d="M658 961.3 H661.3 V967.4 M663.6 969.7 H669.3 V963.8 M671.6 961.5 H676"/>
<path d="M682.5 969.7 H685.2 M689.8 967.4 L693 963.8 M697.6 961.5 H700.5"/>
<path d="M709 973 Q710 966 712.3 963.8 M714.6 961.5 Q718 959.5 724.5 959.3"/>
</g>
<!-- zoom slider strip -->
<path d="M186 988.2 L189.5 984.8 L191 986.2 L192.2 985 L196 988.2 Z" fill="#c4c4c4"/>
<rect x="212" y="986" width="43" height="1.4" fill="#555"/>
<circle cx="244.8" cy="987.6" r="4" fill="#1e1e1e" stroke="#a8a8a8" stroke-width="1.5"/>
<path d="M266.6 989.9 L270.5 985.5 L272.5 987.5 L276.5 983.3 L283.1 989.9 Z" fill="#c4c4c4"/>
<rect x="289.2" y="979.8" width="179" height="14" rx="7" fill="#2c2c2c"/>
</svg>

</body></html>
